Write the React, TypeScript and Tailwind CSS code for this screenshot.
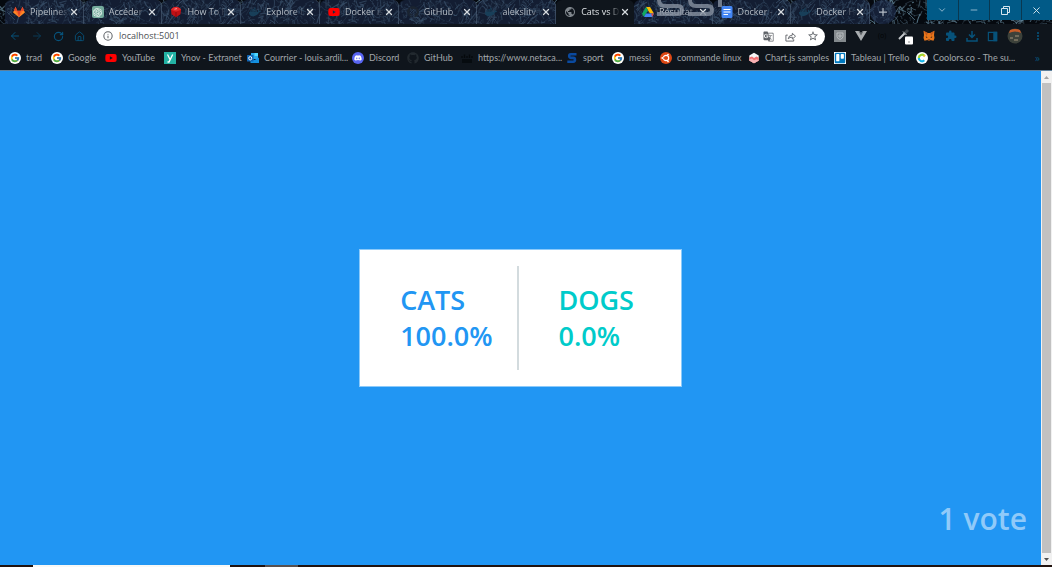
import { type ReactNode } from "react";
import { FaYoutube, FaGithub, FaDocker, FaDiscord, FaTrello } from "react-icons/fa";
import { FcGoogle } from "react-icons/fc";
import { SiOpenai } from "react-icons/si";
import { MdGTranslate, MdStarBorder, MdExtension, MdPublic, MdMoreVert } from "react-icons/md";
import { ArrowLeft, ArrowRight, RotateCw, House, Plus, X, ChevronDown, Minus, Info } from "lucide-react";

type Seg = { d: string; w: number; o: number };

function makeFeathers(): Seg[] {
  let s = 17;
  const r = () => {
    s = (s * 16807) % 2147483647;
    return s / 2147483647;
  };
  const out: Seg[] = [];
  for (let i = 0; i < 620; i++) {
    const x = Math.round(r() * 300);
    const y = Math.round(r() * 26);
    const dx = Math.round(r() * 16 - 8);
    const dy = Math.round(r() * 20 - 10);
    const b = Math.round(r() * 5 - 2);
    out.push({ d: `M${x} ${y}q${dx / 2 + b} ${dy / 2 - b} ${dx} ${dy}`, w: 0.5 + r() * 0.6, o: 0.3 + r() * 0.6 });
  }
  return out;
}
const feathers = makeFeathers();

function Wallpaper() {
  return (
    <svg className="absolute inset-0 h-full w-full" aria-hidden="true">
      <defs>
        <pattern id="feathers" width="300" height="26" patternUnits="userSpaceOnUse">
          <rect width="300" height="26" fill="#05090f" />
          {feathers.map((f, i) => (
            <path key={i} d={f.d} stroke="#5f8195" strokeWidth={f.w} opacity={f.o} fill="none" />
          ))}
        </pattern>
      </defs>
      <rect width="100%" height="100%" fill="url(#feathers)" />
    </svg>
  );
}

const GitlabIcon = () => (
  <svg viewBox="0 0 12 12" className="size-3">
    <path d="M2.500.8 4.300 4.800h3.400L9.500.8l2.300 5.700L6 11.300.2 6.500z" fill="#fc6d26" />
    <path d="M4.300 4.800h3.400L6 11.300z" fill="#e24329" />
    <path d="M.8 5 .2 6.500 6 11.300 2.300 5zM11.200 5l.6 1.500L6 11.300 9.700 5z" fill="#fca326" opacity=".55" />
    <path d="M2.500.8 4.300 4.800H.9zM9.500.8l1.600 4H7.700z" fill="#e24329" />
  </svg>
);
const GptIcon = () => (
  <span className="flex size-3 items-center justify-center rounded-[2px] bg-[#74aa9c] text-white">
    <SiOpenai size={9} />
  </span>
);
const CubeIcon = () => (
  <svg viewBox="0 0 12 12" className="size-3">
    <path d="M6 .8q4 .5 5 3l-.5 4.500L6 11.300 1.500 8.300 1 3.800Q2 1.300 6 .8z" fill="#c01014" />
    <path d="M6 .8q4 .5 5 3L6 5.800 1 3.800Q2 1.300 6 .8z" fill="#e2282a" />
    <path d="M4.500 3.200 7 2.600" stroke="#ff9a9a" strokeWidth="1" />
    <path d="M6 5.800v5.500" stroke="#7d0a0c" strokeWidth=".8" />
  </svg>
);
const DriveIcon = () => (
  <svg viewBox="0 0 12 12" className="size-3">
    <path d="M4 1h4l4 6.500H8z" fill="#fbbc04" />
    <path d="M4 1 0 7.700 2 11 6 4.300z" fill="#11a861" />
    <path d="M4 7.500h8L10 11H2z" fill="#4285f4" />
    <path d="M9.300 7.500H12L10 11z" fill="#ea4335" />
  </svg>
);
const DocsIcon = () => (
  <svg viewBox="0 0 12 12" className="size-3">
    <rect x=".5" width="11" height="12" rx="1.500" fill="#4285f4" />
    <path d="M2.500 3.500h7M2.500 6h7M2.500 8.500h4.500" stroke="#fff" strokeWidth="1.200" />
  </svg>
);
const GoogleIcon = () => (
  <span className="flex size-3 items-center justify-center rounded-full bg-white">
    <FcGoogle size={10} />
  </span>
);
const YnovIcon = () => (
  <svg viewBox="0 0 12 12" className="size-3">
    <rect width="12" height="12" fill="#23b2a4" />
    <path d="M3.500 2.500 6 7.500M8.700 2.500 5 10H3.500" stroke="#fff" strokeWidth="1.300" fill="none" />
  </svg>
);
const OutlookIcon = () => (
  <svg viewBox="0 0 12 12" className="size-3">
    <path d="M4 1h7v6H4z" fill="#28a8ea" />
    <path d="M7.500 1H11v3H7.500z" fill="#50d9ff" />
    <path d="M3.500 5.500 7.500 8l4.500-2.500V11H3.500z" fill="#1490df" />
    <rect y="3" width="6.500" height="6.500" rx=".6" fill="#0f65b5" />
    <ellipse cx="3.250" cy="6.250" rx="1.500" ry="1.700" fill="none" stroke="#fff" strokeWidth="1" />
  </svg>
);
const DiscordIcon = () => (
  <span className="flex size-3 items-center justify-center rounded-full bg-[#5865f2] text-white">
    <FaDiscord size={8} />
  </span>
);
const NetacadIcon = () => (
  <svg viewBox="0 0 12 12" className="size-3" stroke="#05080b" strokeWidth="1.300">
    <path d="M1 4v2M3.500 2.500v3.500M6 4v2M8.500 2.500v3.500M11 4v2M1 8h10M1 10h10" />
  </svg>
);
const SportIcon = () => (
  <svg viewBox="0 0 12 12" className="size-3">
    <path d="M10.500 2.200H4.700C2.700 2.200 2.700 5.900 4.700 5.900h2.600c2.200 0 2.200 3.900 0 3.900H1.300" fill="none" stroke="#0a4aa0" strokeWidth="2.600" />
  </svg>
);
const UbuntuIcon = () => (
  <svg viewBox="0 0 12 12" className="size-3">
    <circle cx="6" cy="6" r="6" fill="#dd4814" />
    <circle cx="6" cy="6" r="2.700" fill="none" stroke="#fff" strokeWidth="1.200" />
    <path d="M2 6h1.500M7.800 2.900l.8-1.300M7.800 9.100l.8 1.300" stroke="#dd4814" strokeWidth="2" />
    <circle cx="2.300" cy="6" r=".9" fill="#fff" />
    <circle cx="8" cy="2.600" r=".9" fill="#fff" />
    <circle cx="8" cy="9.400" r=".9" fill="#fff" />
  </svg>
);
const ChartIcon = () => (
  <svg viewBox="0 0 12 12" className="size-3">
    <path d="M6 .8 10.700 3.500v5L6 11.300 1.300 8.500v-5z" fill="#f5f5f5" />
    <path d="M1.300 5.500 4 4.500l2 1.500 2.500-1.500 2.200 1.200v3L6 11.300 1.300 8.500z" fill="#f27173" />
    <path d="M1.300 7.500 4 6.500l2 1.700 2.500-1 2.200 1v.3L6 11.300 1.300 8.500z" fill="#f7b3b5" />
  </svg>
);
const CoolorsIcon = () => (
  <svg viewBox="0 0 12 12" className="size-3" fill="none" strokeWidth="2.200">
    <circle cx="6" cy="6" r="6" fill="#fff" />
    <path d="M8.300 3.700A3.200 3.200 0 0 0 2.800 6" stroke="#9bd52f" />
    <path d="M2.800 6a3.200 3.200 0 0 0 5.500 2.300" stroke="#19b5e8" />
    <path d="M7.700 3.200 9 4.400" stroke="#f4c430" />
  </svg>
);
const FoxIcon = () => (
  <svg viewBox="0 0 12 12" className="size-3">
    <path d="M.5.8 4.700 3h2.600L11.500.8 11 5l.5 3-1 2.800L7.500 10l-.7.700H5.200L4.500 10l-3 .8L.5 8 1 5z" fill="#e8761b" />
    <path d="M.5.8 4.700 3l-.9 3zM11.500.8 7.300 3l.9 3z" fill="#c4591a" />
    <path d="M2.800 6.300 4.800 7.500 3 7.800zM9.200 6.300 7.200 7.500l1.800.3z" fill="#3b2314" />
    <path d="M4.800 9.500h2.400v1H4.800z" fill="#4a2f20" />
  </svg>
);

type Tab = { title: string; icon: ReactNode; active?: boolean };
const docker = <FaDocker size={12} className="text-[#183f59]" />;
const tabs: Tab[] = [
  { title: "Pipelines", icon: <GitlabIcon /> },
  { title: "Accéder", icon: <GptIcon /> },
  { title: "How To F", icon: <CubeIcon /> },
  { title: "Explore D", icon: docker },
  { title: "Docker is", icon: <FaYoutube size={12} className="text-[#ff0000]" /> },
  { title: "GitHub", icon: <FaGithub size={12} className="text-[#1b2430]" /> },
  { title: "alekslitv", icon: docker },
  { title: "Cats vs D", icon: <MdPublic size={12} className="text-[#7f868c]" />, active: true },
  { title: "Résultat", icon: <DriveIcon /> },
  { title: "Docker -", icon: <DocsIcon /> },
  { title: "Docker H", icon: docker },
];

const bookmarks: { title: string; icon: ReactNode; width: string }[] = [
  { title: "trad", icon: <GoogleIcon />, width: "w-[42px]" },
  { title: "Google", icon: <GoogleIcon />, width: "w-[54px]" },
  { title: "YouTube", icon: <FaYoutube size={12} className="text-[#ff0000]" />, width: "w-[59px]" },
  { title: "Ynov - Extranet", icon: <YnovIcon />, width: "w-[83px]" },
  { title: "Courrier - louis.ardil...", icon: <OutlookIcon />, width: "w-[105px]" },
  { title: "Discord", icon: <DiscordIcon />, width: "w-[55px]" },
  { title: "GitHub", icon: <FaGithub size={12} className="text-[#22292f]" />, width: "w-[54px]" },
  { title: "https://www.netaca...", icon: <NetacadIcon />, width: "w-[105px]" },
  { title: "sport", icon: <SportIcon />, width: "w-[46px]" },
  { title: "messi", icon: <GoogleIcon />, width: "w-[48px]" },
  { title: "commande linux", icon: <UbuntuIcon />, width: "w-[88px]" },
  { title: "Chart.js samples", icon: <ChartIcon />, width: "w-[86px]" },
  { title: "Tableau | Trello", icon: <FaTrello size={12} className="bg-white text-[#0079bf]" />, width: "w-[82px]" },
  { title: "Coolors.co - The su...", icon: <CoolorsIcon />, width: "w-[96px]" },
];

function TabStrip() {
  return (
    <div className="relative flex h-6 overflow-hidden">
      <Wallpaper />
      <div role="tablist" className="relative flex min-w-0 flex-1 pl-[5px]">
        {tabs.map((t, i) => (
          <div
            key={i}
            className={`flex min-w-0 flex-1 basis-0 items-center rounded-t-md pl-2 ${
              t.active ? "bg-[#0f151c] text-[#dfe3e6]" : "border-r border-[#52647c]/60 bg-[#1d2b49]/60 text-[#b4bbc3]"
            }`}
          >
            <button role="tab" aria-selected={!!t.active} className="flex min-w-0 flex-1 items-center gap-[5px]">
              <span className="flex size-3 shrink-0 items-center justify-center">{t.icon}</span>
              <span className="min-w-0 flex-1 overflow-hidden whitespace-nowrap mask-r-from-70% mask-r-to-100% text-left text-[9px] leading-3">
                {t.title}
              </span>
            </button>
            <button aria-label={`Close ${t.title}`} className="mr-1 flex w-[10px] shrink-0 justify-center text-[#d5dade]">
              <X size={10} strokeWidth={3} />
            </button>
          </div>
        ))}
        <svg viewBox="0 0 68 18" className="absolute top-0 left-[655px] h-[18px] w-[68px]" fill="none" stroke="#8791a0" strokeWidth="4" opacity=".8" aria-hidden="true">
          <path d="M4 0q0 6 6 6h13q4 0 4 4t-4 4H2M35 0q0 6 6 6h12q4 0 4 4t-4 4H33M65 0v7" />
        </svg>
      </div>
      <button aria-label="New tab" className="relative mr-[31px] flex w-[26px] items-center justify-center rounded-full bg-[#1d2b49]/70 text-[#b4bcc5]">
        <Plus size={12} strokeWidth={2.500} />
      </button>
      <div className="relative flex h-5 w-[125px] text-[#a8c8da]">
        <button aria-label="Search tabs" className="flex flex-1 items-center justify-center border-r border-[#0a3850] bg-[#015a87]"><ChevronDown size={10} /></button>
        <button aria-label="Minimize" className="flex flex-1 items-center justify-center border-r border-[#0a3850] bg-[#015a87]"><Minus size={10} /></button>
        <button aria-label="Restore" className="flex flex-1 items-center justify-center border-r border-[#0a3850] bg-[#015a87]">
          <svg viewBox="0 0 9 9" className="size-[9px]" fill="none" stroke="#d5e4ee"><path d="M.5 2.500h6v6h-6zM2.500 2.500v-2h6v6h-2" /></svg>
        </button>
        <button aria-label="Close" className="flex flex-1 items-center justify-center bg-[#015a87] text-[#dce9f0]"><X size={11} /></button>
      </div>
    </div>
  );
}

function Toolbar() {
  return (
    <div className="flex h-6 items-center bg-[#0f151c] pr-2 pl-[9px] text-[#07527a]">
      <div className="flex w-[87px] shrink-0 gap-[10px]">
        <button aria-label="Back"><ArrowLeft size={12} /></button>
        <button aria-label="Forward" className="opacity-60"><ArrowRight size={12} /></button>
        <button aria-label="Reload"><RotateCw size={11} strokeWidth={2.500} /></button>
        <button aria-label="Home"><House size={11} /></button>
      </div>
      <div className="flex h-[19px] min-w-0 flex-1 items-center rounded-full bg-white pr-[6px] pl-[7px] text-[#5f6368]">
        <Info size={10} strokeWidth={2.500} className="shrink-0" />
        <input aria-label="Address" defaultValue="localhost:5001" className="ml-[6px] min-w-0 flex-1 bg-transparent text-[9px] text-[#4b4f54] outline-none" />
        <div className="flex items-center gap-[11px]">
          <button aria-label="Translate"><MdGTranslate size={11} /></button>
          <button aria-label="Share">
            <svg viewBox="0 0 12 12" className="size-[11px]" fill="none" stroke="currentColor"><path d="M3 4.500H1v6.500h8.500V9M3.500 8.500q.5-4 4.500-4V2.500l3.500 3.200L8 8.800V6.700q-3 0-4.500 1.800z" /></svg>
          </button>
          <button aria-label="Bookmark"><MdStarBorder size={12} /></button>
        </div>
      </div>
      <div className="ml-[9px] flex w-[210px] shrink-0 items-center justify-between">
        <button aria-label="Shield extension" className="flex size-3 items-center justify-center bg-[#83898d]">
          <svg viewBox="0 0 10 10" className="size-[10px]" fill="none" stroke="#b8bdc0"><path d="M2 2h6v3.500q0 2-3 3-3-1-3-3zM4 4h2v2H4z" /></svg>
        </button>
        <button aria-label="Vue devtools">
          <svg viewBox="0 0 12 12" className="size-3"><path d="M0 1h4.500L6 3.500 7.500 1H12L6 11z" fill="#a9adb0" /><path d="M3.500 1h1L6 3.500 7.500 1h1L6 5.500z" fill="#5b6064" /></svg>
        </button>
        <button aria-label="JSON extension" className="w-3 text-[7px] leading-3 text-[#030506]">(o)</button>
        <button aria-label="Color picker">
          <svg viewBox="0 0 17 17" className="size-[17px]"><path d="M2 11 8 5" stroke="#c3c7ca" strokeWidth="2" /><path d="M7.500 5.500 11 2" stroke="#3d444a" strokeWidth="3" /><path d="M6 3.500 9.500 7" stroke="#c3c7ca" /><rect x="8" y="8.500" width="8" height="8" rx="1" fill="#fff" /><path d="M11.500 14h1" stroke="#222" /></svg>
        </button>
        <button aria-label="Wallet"><FoxIcon /></button>
        <button aria-label="Extensions"><MdExtension size={12} /></button>
        <button aria-label="Downloads">
          <svg viewBox="0 0 12 12" className="size-3" fill="none" stroke="currentColor" strokeWidth="1.500"><path d="M6 1v6M3 4.500 6 7.500l3-3M1 8v3h10V8" /></svg>
        </button>
        <button aria-label="Side panel">
          <svg viewBox="0 0 12 12" className="size-[11px]" fill="none" stroke="currentColor" strokeWidth="1.300"><path d="M1.500 1.500h9v9h-9z" /><path d="M7.500 1.500h3v9h-3z" fill="currentColor" /></svg>
        </button>
        <button aria-label="Profile">
          <svg viewBox="0 0 16 16" className="size-4"><circle cx="8" cy="8" r="7.500" fill="#3c413a" /><path d="M2 5q6-3 12 0l-1-3q-5-2-10 0z" fill="#c65c28" /><path d="M3 9h3v2H3zM8 7h4v2H8zM7 11h4v2H7z" fill="#706b5b" /></svg>
        </button>
        <button aria-label="Menu"><MdMoreVert size={12} /></button>
      </div>
    </div>
  );
}

function Bookmarks() {
  return (
    <nav aria-label="Bookmarks" className="flex h-[23px] items-center overflow-hidden border-b border-[#5d7f9b] bg-[#0f151c] pb-[2px] pl-[9px] text-[#a2a7ab]">
      {bookmarks.map((b, i) => (
        <a key={i} href="#bookmark" className={`flex shrink-0 items-center gap-[5px] font-['Lato','Noto_Sans',sans-serif] text-[9px] leading-3 whitespace-nowrap ${b.width}`}>
          <span className="flex size-3 shrink-0 items-center justify-center">{b.icon}</span>
          {b.title}
        </a>
      ))}
      <button aria-label="More bookmarks" className="mr-3 ml-auto text-[10px] leading-3 text-[#07527a]">»</button>
    </nav>
  );
}

export default function App() {
  return (
    <div className="flex h-screen flex-col overflow-hidden bg-[#0f151c] font-['Open_Sans','Noto_Sans',sans-serif]">
      <header>
        <TabStrip />
        <Toolbar />
        <Bookmarks />
      </header>
      <div className="flex min-h-0 flex-1">
        <main className="grid min-w-0 flex-1 grid-rows-[1fr_auto_1fr] justify-items-center bg-[#2196f3] font-semibold">
          <section className="row-start-2 flex h-[138px] w-[31%] items-stretch border border-[#8ccafa] bg-white py-4 text-[27px] leading-9">
            <div className="flex w-[calc(50%-1px)] flex-col justify-center border-r-2 border-[#d3dbde] pl-10 text-[#2196f3]">
              <h2>CATS</h2>
              <p>100.0%</p>
            </div>
            <div className="flex flex-1 flex-col justify-center pl-[39px] text-[#00cbca]">
              <h2>DOGS</h2>
              <p>0.0%</p>
            </div>
          </section>
          <p className="row-start-3 self-end justify-self-end pr-[14px] pb-[26px] text-[30px] leading-10 text-[#90caf9]">1 vote</p>
        </main>
        <div className="flex w-[11px] shrink-0 flex-col items-center bg-[#f1f1f1]" aria-hidden="true">
          <svg viewBox="0 0 11 12" className="h-3 w-[11px]"><path d="M3 8h5L5.500 5z" fill="#a3a3a3" /></svg>
          <div className="w-[9px] flex-1 bg-[#c1c1c1]" />
          <svg viewBox="0 0 11 12" className="h-3 w-[11px]"><path d="M3 5h5L5.500 8z" fill="#505050" /></svg>
        </div>
      </div>
      <footer className="flex h-[2px] shrink-0 bg-[#21130f] pl-[33px]">
        <div className="w-[197px] bg-[#f8f8f6]" />
        <div className="ml-[35px] w-[33px] bg-[#57504f]" />
      </footer>
    </div>
  );
}
